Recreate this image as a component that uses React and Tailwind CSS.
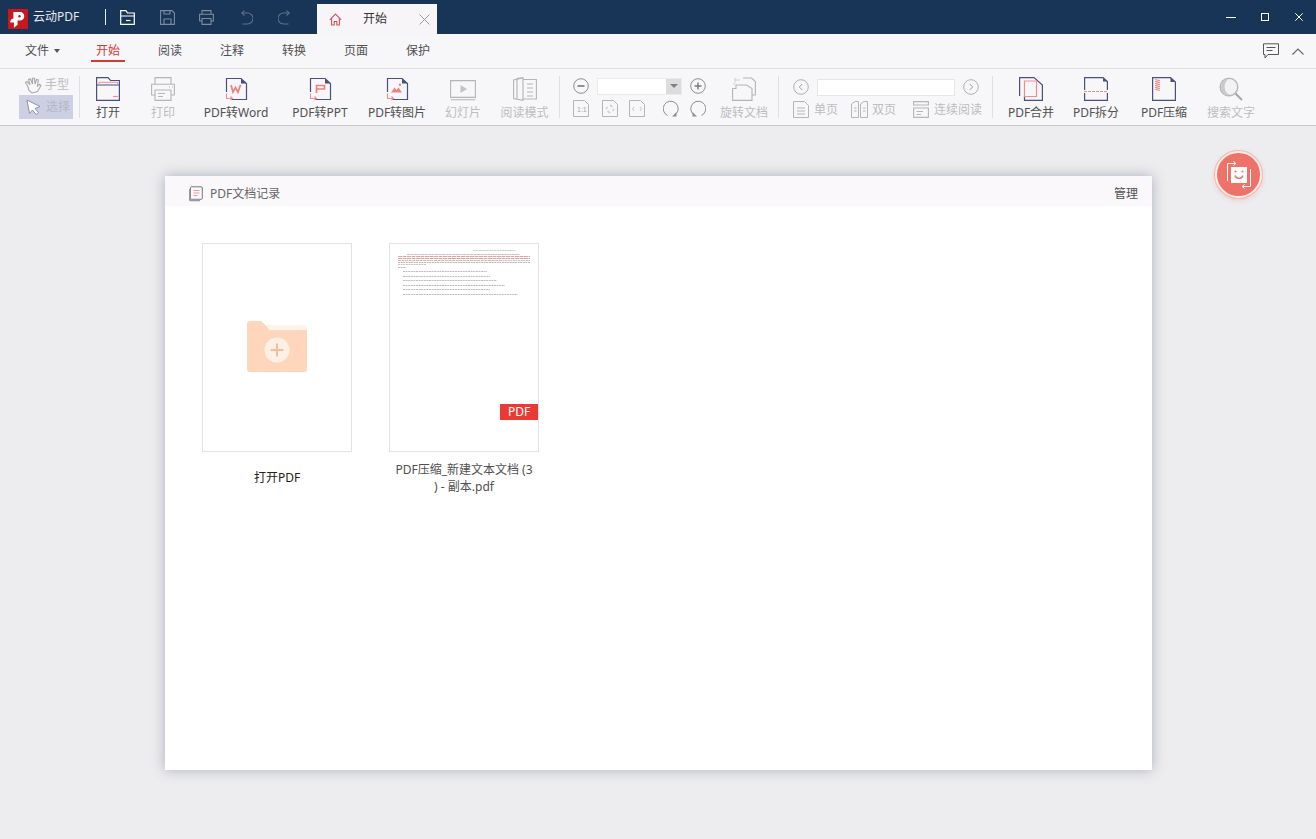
const NAVY = "#4a4f7c";
const PINK = "#ee8f8b";
const GR = "#b5b5b8";

const Svg = ({ w = 24, h = 24, className = "", children }) => (
  <svg width={w} height={h} viewBox={`0 0 ${w} ${h}`} fill="none" className={`block shrink-0 ${className}`}>
    {children}
  </svg>
);

const Doc = ({ children, stroke = NAVY }) => (
  <Svg w={24} h={24}>
    <path d="M2.5 15V1.5H17L22.5 6.5V22.5H7" stroke={stroke} strokeWidth="1.2" />
    <path d="M17 1.5V6.5H22.5" fill={stroke} />
    {children}
    <path d="M2.5 16.5V21.5H8M6.5 19.5L8.5 21.5L6.5 23" stroke={PINK} strokeWidth="1.1" />
  </Svg>
);

const Tool = ({ w, label, disabled, children }) => (
  <div className="flex flex-col items-center shrink-0" style={{ width: w }}>
    <div className="h-[24px] mt-[8px] flex items-center justify-center">{children}</div>
    <div className={`mt-[2px] h-[20px] leading-[20px] text-xs whitespace-nowrap ${disabled ? "text-[#bdbdc0]" : "text-[#505050]"}`}>{label}</div>
  </div>
);

const Divider = () => <div className="w-px h-[42px] mt-[7px] bg-[#e0e0e3] shrink-0" />;

const CircleBtn = ({ kind }) => (
  <Svg w={16} h={16}>
    <circle cx="8" cy="8" r="7.3" stroke={kind === "minus" || kind === "plus" ? "#8e8e92" : "#b0b0b4"} strokeWidth="1" />
    {kind === "minus" && <path d="M4.5 8H11.5" stroke="#77777b" strokeWidth="1.6" />}
    {kind === "plus" && <path d="M4.5 8H11.5M8 4.5V11.5" stroke="#77777b" strokeWidth="1.4" />}
    {kind === "prev" && <path d="M9.3 5L6.3 8L9.3 11" stroke="#a0a0a4" strokeWidth="1" />}
    {kind === "next" && <path d="M6.7 5L9.7 8L6.7 11" stroke="#a0a0a4" strokeWidth="1" />}
  </Svg>
);

const SmallDoc = ({ children }) => (
  <Svg w={16} h={17}>
    <path d="M.5 .5H11.5L15.5 4.5V16.5H.5Z" stroke={GR} strokeWidth="1" />
    {children}
  </Svg>
);

const Rotate = ({ flip }) => (
  <Svg w={16} h={17} className={flip ? "-scale-x-100" : ""}>
    <path d="M4.5 15.5A7.5 7.5 0 1 1 12.5 14.5" stroke="#8e8e92" strokeWidth="1" />
    <path d="M9 16.5L13.5 16.5L13.5 12Z" fill="#8e8e92" />
  </Svg>
);

const PageLabel = ({ className = "", children }) => (
  <span className={`text-xs text-[#bdbdc0] whitespace-nowrap ${className}`}>{children}</span>
);

const TitleIcons = () => (
  <div className="flex items-center">
    <div className="w-px h-[16px] bg-[#e8ecf0] ml-[26px]" />
    <Svg w={16} h={15} className="ml-[14px]">
      <path d="M.7 14.3V.7H6L7.5 3H14.3V14.3ZM.7 6H15" stroke="#ffffff" strokeWidth="1.2" />
      <path d="M6 10.5H10.5" stroke="#ffffff" strokeWidth="1.2" />
    </Svg>
    <Svg w={15} h={15} className="ml-[24px]">
      <path d="M.6.6H12L14.4 3V14.4H.6Z" stroke="#7b8ca0" strokeWidth="1.1" />
      <path d="M4 14V9H11V14M4 .8V4H10V.8" stroke="#7b8ca0" strokeWidth="1.1" />
    </Svg>
    <Svg w={15} h={15} className="ml-[24px]">
      <path d="M3 4V.6H12V4M3 11H.6V4.2H14.4V11H12M3 8.5H12V14.4H3Z" stroke="#7b8ca0" strokeWidth="1.1" />
    </Svg>
    <Svg w={13} h={15} className="ml-[26px]">
      <path d="M3 3H7.5A5 5 0 0 1 7.5 14H2.5" stroke="#5f7389" strokeWidth="1.1" />
      <path d="M4.5 .6L1.8 3L4.5 5.6" stroke="#5f7389" strokeWidth="1.1" />
    </Svg>
    <Svg w={13} h={15} className="ml-[25px]">
      <path d="M10 3H5.5A5 5 0 0 0 5.5 14H10.5" stroke="#5f7389" strokeWidth="1.1" />
      <path d="M8.5 .6L11.2 3L8.5 5.6" stroke="#5f7389" strokeWidth="1.1" />
    </Svg>
  </div>
);

const Thumb = () => (
  <svg width="148" height="207" viewBox="0 0 148 207" fill="none" className="block">
    <g strokeWidth="1">
      <path d="M83.5 6.5H125.5" stroke="#c9c9c9" strokeDasharray="2 .6" />
      <path d="M17 10.5H130" stroke="#e2b8b8" strokeDasharray="3 .5" />
      <path d="M8 12.5H140" stroke="#d9a6a6" strokeDasharray="4 .5" />
      <path d="M8 14.5H140" stroke="#d9a2a2" strokeDasharray="4 .5" />
      <path d="M8 16.5H110" stroke="#d8b0b0" strokeDasharray="3 .6" />
      <path d="M110 16.5H140" stroke="#c0c0c0" strokeDasharray="2 .6" />
      <path d="M8 18.5H140" stroke="#b8b8b8" strokeDasharray="2 .6" />
      <path d="M8 20.5H36" stroke="#c4c4c4" strokeDasharray="2 .6" />
      <path d="M8 23.5H16" stroke="#bdbdbd" strokeDasharray="2 .6" />
      <path d="M13 27.5H97" stroke="#bebebe" strokeDasharray="2 .6" />
      <path d="M13 32.5H100" stroke="#bebebe" strokeDasharray="2 .6" />
      <path d="M13 36.5H107" stroke="#bebebe" strokeDasharray="2 .6" />
      <path d="M13 41.5H115" stroke="#bebebe" strokeDasharray="2 .6" />
      <path d="M13 45.5H100" stroke="#bebebe" strokeDasharray="2 .6" />
      <path d="M13 50.5H128" stroke="#bebebe" strokeDasharray="2 .6" />
    </g>
  </svg>
);

export default function App() {
  return (
    <div
      className="w-[1316px] h-[839px] relative overflow-hidden flex flex-col bg-[#edecef]"
      style={{ fontFamily: '"Noto Sans", "Noto Sans CJK SC", sans-serif' }}
    >
      {/* Title bar */}
      <header className="h-[34px] bg-[#183456] flex items-center shrink-0">
        <div className="w-[20px] h-[20px] ml-[8px] mt-[3px] bg-[#c9171e] flex items-center justify-center">
          <Svg w={18} h={18}>
            <path d="M5 9V2.5H11A3.6 3.6 0 0 1 11 9.8H8V14.5L5.5 16.5V12H1.8A3.3 3.3 0 0 1 5 9Z" fill="#ffffff" stroke="#ffffff" strokeWidth="1.2" />
            <circle cx="10.5" cy="6.2" r="1.2" fill="#c9171e" />
          </Svg>
        </div>
        <span className="ml-[5px] w-[46px] text-xs text-white/90 whitespace-nowrap">云动PDF</span>
        <TitleIcons />
        <div className="ml-[26px] mt-[4px] w-[120px] h-[30px] bg-[#f7f5f8] flex items-center">
          <Svg w={13} h={13} className="ml-[12px]">
            <path d="M.8 6.8L6.5 1L12.2 6.8M2.6 5.5V12H5.2V8.5H7.8V12H10.4V5.5" stroke="#d9534f" strokeWidth="1.1" />
          </Svg>
          <span className="ml-[21px] text-xs text-[#333333]">开始</span>
          <Svg w={11} h={11} className="ml-[32px]">
            <path d="M.5.5L10.5 10.5M10.5.5L.5 10.5" stroke="#9b9b9f" strokeWidth="1" />
          </Svg>
        </div>
        <div className="ml-auto flex items-center">
          <div className="w-[10px] h-px bg-white" />
          <div className="ml-[25px] w-[8px] h-[8px] border border-white" />
          <Svg w={8} h={8} className="ml-[26px] mr-[13px]">
            <path d="M.3.3L7.7 7.7M7.7.3L.3 7.7" stroke="#ffffff" strokeWidth="1" />
          </Svg>
        </div>
      </header>

      {/* Menu bar */}
      <nav className="h-[35px] bg-[#f7f6f9] border-b border-[#dededf] flex items-center pl-[25px] shrink-0">
        <div className="w-[52px] flex items-center text-xs text-[#505050]">
          文件
          <span className="ml-[5px] w-0 h-0 border-x-[3px] border-x-transparent border-t-[4px] border-t-[#555555]" />
        </div>
        {["开始", "阅读", "注释", "转换", "页面", "保护"].map((t, i) => (
          <div key={t} className="w-[62px] flex justify-center">
            <span className={`relative text-xs ${i === 0 ? "text-[#d33a36]" : "text-[#505050]"}`}>
              {t}
              {i === 0 && <span className="absolute left-[-5px] right-[-5px] top-[17px] h-[2px] bg-[#d33a36]" />}
            </span>
          </div>
        ))}
        <Svg w={16} h={16} className="ml-auto">
          <path d="M.5 .8H15.5V11.5H5L2 15V11.5H.5Z" stroke="#55555a" strokeWidth="1" />
          <path d="M3.5 4.5H12.5M3.5 7.5H9.5" stroke="#55555a" strokeWidth="1" />
        </Svg>
        <Svg w={12} h={7} className="ml-[13px] mr-[12px]">
          <path d="M.5 6.5L6 1L11.5 6.5" stroke="#66666a" strokeWidth="1.1" />
        </Svg>
      </nav>

      {/* Toolbar */}
      <section className="h-[57px] bg-[#f7f6f9] border-b border-[#c8c8ca] flex pl-[19px] shrink-0">
        <div className="w-[60px] shrink-0 flex flex-col pt-[6px]">
          <div className="h-[20px] flex items-center pl-[5px]">
            <Svg w={18} h={17}>
              <path d="M4 10L1.5 5.5L3 4.5L6 8L4.5 2.5L6.5 2L8.5 7L8.5 1.2L10.5 1.2L11 7L12.5 2.5L14.3 3L13.5 9L15.5 7.5L17 8.5L13.5 14.5L8 16L5 13.5Z" stroke="#a9a9ad" strokeWidth="1.1" />
            </Svg>
            <span className="ml-[3px] text-xs text-[#bdbdc0]">手型</span>
          </div>
          <div className="w-[54px] h-[24px] bg-[#cdd0e3] flex items-center pl-[7px]">
            <Svg w={15} h={16}>
              <path d="M1 1L14 7.5L9 9.5L12.5 13.5L10 15.5L6.5 11L3.5 14.5Z" fill="#ffffff" stroke="#8e90a6" strokeWidth="1" />
            </Svg>
            <span className="ml-[5px] text-xs text-[#b4b6c4]">选择</span>
          </div>
        </div>
        <Divider />
        <Tool w={56} label="打开">
          <Svg w={24} h={24}>
            <path d="M.6 23.4V.6H12L14.5 3.5H23.4V23.4ZM.6 8H23.4" stroke={NAVY} strokeWidth="1.2" />
            <path d="M3 8V5.3H21.5V8" stroke={PINK} strokeWidth="1" />
            <path d="M17 19.5H22" stroke={PINK} strokeWidth="1.2" />
          </Svg>
        </Tool>
        <Tool w={54} label="打印" disabled>
          <Svg w={24} h={24}>
            <path d="M4 7V.6H20V7M4 18H.6V7.3H23.4V18H20M4 13H20V23.4H4Z" stroke={GR} strokeWidth="1.1" />
            <path d="M7 16.5H14M7 19.5H12" stroke={GR} strokeWidth="1" />
            <path d="M18 10H19M21 10H22" stroke={GR} strokeWidth="1" />
          </Svg>
        </Tool>
        <Tool w={92} label="PDF转Word">
          <Doc>
            <path d="M7 8L9 15L11.5 10.5L14 15L16.5 8" stroke="#ea8480" strokeWidth="1.8" />
          </Doc>
        </Tool>
        <Tool w={76} label="PDF转PPT">
          <Doc>
            <path d="M8.5 16V8.5H16.5V12H8.5" stroke="#ea8480" strokeWidth="1.7" />
          </Doc>
        </Tool>
        <Tool w={78} label="PDF转图片">
          <Doc>
            <path d="M6 15.5L9.5 10.5L11.5 13L13.5 10.5L17 15.5Z" fill="#ea8480" />
            <circle cx="15" cy="7.8" r="1.2" fill="#ea8480" />
          </Doc>
        </Tool>
        <Tool w={54} label="幻灯片" disabled>
          <Svg w={26} h={24}>
            <path d="M.6 3.6H25.4V20.4H.6ZM.6 22.8H25.4" stroke={GR} strokeWidth="1.1" />
            <path d="M10.5 8L17 12L10.5 16Z" fill="#c4c4c7" />
          </Svg>
        </Tool>
        <Tool w={69} label="阅读模式" disabled>
          <Svg w={24} h={24}>
            <path d="M.6 3V21.5L10 23.4V1L.6 3ZM4 21.5V1.5L10 .6M10 2.5H23.4V22H10" stroke={GR} strokeWidth="1.1" />
            <path d="M14 7H20M14 11H20M14 15H20M14 19H20" stroke={GR} strokeWidth="1" />
          </Svg>
        </Tool>
        <Divider />

        {/* Zoom */}
        <div className="w-[160px] shrink-0 pl-[13px] flex flex-col">
          <div className="flex items-center h-[18px] mt-[8px]">
            <CircleBtn kind="minus" />
            <div className="ml-[8px] w-[85px] h-[17px] flex bg-white border border-[#ebebed]">
              <div className="flex-1" />
              <div className="w-[15px] bg-[#dcdcde] flex items-center justify-center">
                <span className="w-0 h-0 border-x-[4px] border-x-transparent border-t-[4px] border-t-[#808084]" />
              </div>
            </div>
            <div className="ml-[8px]"><CircleBtn kind="plus" /></div>
          </div>
          <div className="flex items-center mt-[5px]">
            <SmallDoc>
              <text x="4" y="12" fontSize="7" fill="#a8a8ac" style={{ fontFamily: '"Liberation Sans", sans-serif' }}>1:1</text>
            </SmallDoc>
            <div className="ml-[13px]">
              <SmallDoc>
                <path d="M8 5L10.5 7M12 9L10.5 11M8 13L5.5 11M4 9L5.5 7" stroke="#c4c4c7" strokeWidth="1.2" />
              </SmallDoc>
            </div>
            <div className="ml-[11px]">
              <SmallDoc>
                <path d="M5 7L3.5 9L5 11M11 7L12.5 9L11 11" stroke="#c4c4c7" strokeWidth="1" />
              </SmallDoc>
            </div>
            <div className="ml-[18px]"><Rotate /></div>
            <div className="ml-[11px]"><Rotate flip /></div>
          </div>
        </div>
        <Tool w={48} label="旋转文档" disabled>
          <Svg w={24} h={24}>
            <path d="M11 1H19.5L23.4 4.5V18H20" stroke={GR} strokeWidth="1.1" />
            <path d="M.6 11.5H4V8H14.5L20 11.5V23.4H.6Z" stroke={GR} strokeWidth="1.1" fill="#f7f6f9" />
            <path d="M3 6V3H8M4 .8L2 3M1 6L3 8" stroke="#cfcfd2" strokeWidth="1" />
          </Svg>
        </Tool>
        <div className="w-[10px] shrink-0" />
        <Divider />

        {/* Pages */}
        <div className="w-[213px] shrink-0 pl-[14px] flex flex-col">
          <div className="flex items-center h-[18px] mt-[9px]">
            <CircleBtn kind="prev" />
            <div className="ml-[8px] w-[138px] h-[17px] bg-white border border-[#e6e6e8]" />
            <div className="ml-[8px]"><CircleBtn kind="next" /></div>
          </div>
          <div className="flex items-center mt-[5px]">
            <SmallDoc>
              <path d="M4 7H12M4 10H12M4 13H12" stroke={GR} strokeWidth="1" />
            </SmallDoc>
            <PageLabel className="ml-[5px]">单页</PageLabel>
            <Svg w={17} h={17} className="ml-[13px]">
              <path d="M.5 16.5V3L4 .5H7.5V16.5ZM9.5 16.5V3L13 .5H16.5V16.5Z" stroke={GR} strokeWidth="1" />
              <path d="M3 7H5.5M3 10H5.5M12 7H14.5M12 10H14.5" stroke={GR} strokeWidth="1" />
            </Svg>
            <PageLabel className="ml-[4px]">双页</PageLabel>
            <Svg w={16} h={17} className="ml-[17px]">
              <path d="M.6 .6H15.4V4H.6ZM.6 7H15.4V16.4H.6Z" stroke={GR} strokeWidth="1.1" />
              <path d="M3.5 10.5H10M3.5 13.5H8" stroke={GR} strokeWidth="1" />
            </Svg>
            <PageLabel className="ml-[5px]">连续阅读</PageLabel>
          </div>
        </div>
        <Divider />

        <Tool w={76} label="PDF合并">
          <Svg w={24} h={24}>
            <path d="M.6 19V.6H15L23.4 8V23.4H5.5V19" stroke={NAVY} strokeWidth="1.2" />
            <path d="M5.5 4H17.5V19.5H5.5Z" stroke={PINK} strokeWidth="1.2" />
          </Svg>
        </Tool>
        <Tool w={54} label="PDF拆分">
          <Svg w={24} h={24}>
            <path d="M.6 13V.6H19L23.4 4.5V13M.6 16V23.4H23.4V16" stroke={NAVY} strokeWidth="1.2" />
            <path d="M19 .6V4.5H23.4" fill={NAVY} />
            <path d="M0 14.5H24" stroke={PINK} strokeWidth="1" strokeDasharray="3 1" />
          </Svg>
        </Tool>
        <Tool w={82} label="PDF压缩">
          <Svg w={24} h={24}>
            <path d="M.6.6H18.5L23.4 5V23.4H.6Z" stroke={NAVY} strokeWidth="1.2" />
            <path d="M18.5 .6V5H23.4" fill={NAVY} />
            <path d="M3 2.5L8 3.5L3 4.5L8 5.5L3 6.5L8 7.5L3 8.5L8 9.5L3 10.5L8 11.5L3 12.5L8 13.5" stroke={PINK} strokeWidth=".9" />
          </Svg>
        </Tool>
        <Tool w={52} label="搜索文字" disabled>
          <Svg w={24} h={24}>
            <circle cx="10" cy="10" r="8.8" stroke="#b9b9bc" strokeWidth="1.5" fill="#f2f2f4" />
            <path d="M2 10A8 8 0 0 1 10 2A9 9 0 0 0 11 18A8 8 0 0 1 2 10Z" fill="#c9c9cc" />
            <path d="M16.5 16.5L23 23" stroke="#a9a9ac" strokeWidth="2.2" />
          </Svg>
        </Tool>
      </section>

      {/* Work area */}
      <main className="flex-1 relative pt-[50px] pl-[165px]">
        <div className="w-[987px] h-[594px] bg-white flex flex-col shadow-[0_0_12px_rgba(90,105,130,0.45)]">
          <div className="h-[30px] bg-[#faf8fb] flex items-center pt-[5px] pl-[23px] pr-[14px] shrink-0">
            <Svg w={15} h={16}>
              <path d="M2.5 1.5A1 1 0 0 1 3.5 .8H13.5A1 1 0 0 1 14.3 1.8V12.5A1 1 0 0 1 13.5 13.3H3.5A1 1 0 0 1 2.5 12.3Z" stroke="#77777b" strokeWidth="1" />
              <path d="M2.5 3H1V14A1.4 1.4 0 0 0 2.4 15.3H12V13.3H3.5L2.5 12Z" fill="#9a9a9e" />
              <path d="M5.5 4.5H11.5M5.5 7H11.5M5.5 9.5H9.5" stroke="#ee9a96" strokeWidth="1" />
            </Svg>
            <span className="ml-[7px] text-xs text-[#666666]">PDF文档记录</span>
            <span className="ml-auto text-xs text-[#505050]">管理</span>
          </div>
          <div className="flex gap-[37px] pl-[37px] pt-[37px]">
            <div className="w-[150px]">
              <div className="h-[209px] border border-[#e3e3e5] flex items-center justify-center">
                <Svg w={60} h={51} className="mb-[3px]">
                  <path d="M0 3A3 3 0 0 1 3 0H14L21 6.5H57A3 3 0 0 1 60 9.5V48A3 3 0 0 1 57 51H3A3 3 0 0 1 0 48Z" fill="#fdd6bb" />
                  <path d="M18 4H57A3 3 0 0 1 60 7V9H22.5Z" fill="#fff3ea" />
                  <circle cx="30" cy="29" r="12.5" fill="#fff0e6" />
                  <path d="M23.5 29H36.5M30 22.5V35.5" stroke="#f4bd98" strokeWidth="2" />
                </Svg>
              </div>
              <div className="h-[52px] flex items-center justify-center text-xs text-[#222222]">打开PDF</div>
            </div>
            <div className="w-[150px]">
              <div className="relative h-[209px] border border-[#e3e3e5]">
                <Thumb />
                <div className="absolute right-0 top-[160px] w-[38px] h-[16px] bg-[#e93b36] text-white text-xs leading-[16px] text-center">PDF</div>
              </div>
              <div className="h-[52px] flex items-center justify-center text-center text-xs leading-[17px] text-[#505050]">
                <div>PDF压缩_新建文本文档 (3<br />) - 副本.pdf</div>
              </div>
            </div>
          </div>
        </div>

        <div className="absolute left-[1215px] top-[25px] w-[47px] h-[47px] rounded-full bg-[#ee7268] border-2 border-[#fdeeec] flex items-center justify-center shadow-[0_0_0_1px_#f6b6b0,0_2px_5px_rgba(238,114,104,0.3)]">
          <Svg w={26} h={28}>
            <path d="M5 6H21V22H5Z" fill="#ffffff" />
            <path d="M1.5 20V2.5H9.5M7.5 .5L9.8 2.5L7.5 4.5" stroke="#ffffff" strokeWidth="1" />
            <path d="M24.5 8V25.5H16.5M18.5 23.5L16.2 25.5L18.5 27.5" stroke="#ffffff" strokeWidth="1" />
            <path d="M9 14.5A4.2 4.2 0 0 0 17 14.5" stroke="#ee7268" strokeWidth="1.4" />
            <circle cx="9.5" cy="10.5" r="1.1" fill="#ee7268" />
            <circle cx="16.5" cy="10.5" r="1.1" fill="#ee7268" />
          </Svg>
        </div>
      </main>
    </div>
  );
}
